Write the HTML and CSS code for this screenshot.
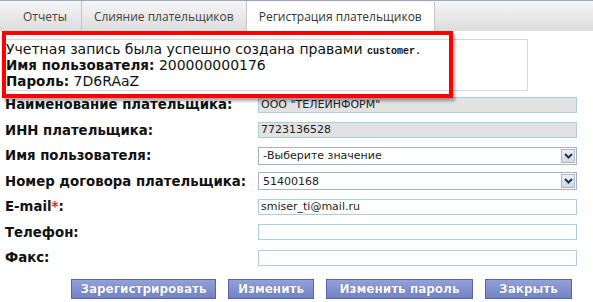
FILE: index.html
```html
<!DOCTYPE html>
<html lang="ru">
<head>
    <meta charset="UTF-8">
    <title>Регистрация плательщиков</title>
    <link rel="stylesheet" href="styles.css">
</head>
<body>
    <div class="reg-page">
        <div class="reg-tabs">
            <a href="#" class="reg-tab">Отчеты</a>
            <a href="#" class="reg-tab">Слияние плательщиков</a>
            <a href="#" class="reg-tab active">Регистрация плательщиков</a>
        </div>

        <div class="reg-content">
            <div class="reg-message">
                <div class="reg-line">Учетная запись была успешно создана правами <span class="reg-role">customer.</span></div>
                <div class="reg-line"><b>Имя пользователя:</b> 200000000176</div>
                <div class="reg-line"><b>Пароль:</b> 7D6RAaZ</div>
            </div>

            <!-- annotation frame drawn over the message -->
            <div class="reg-highlight"></div>

            <div class="reg-form">
                <label class="reg-label">Наименование плательщика:</label>
                <div class="reg-input readonly">ООО "ТЕЛЕИНФОРМ"</div>

                <label class="reg-label">ИНН плательщика:</label>
                <div class="reg-input readonly">7723136528</div>

                <label class="reg-label">Имя пользователя:</label>
                <div class="reg-select">
                    <span>-Выберите значение</span>
                    <span class="reg-arrow"><svg width="9" height="6" viewBox="0 0 9 6"><path d="M1 1 L4.5 4.5 L8 1" fill="none" stroke="#26324e" stroke-width="2"/></svg></span>
                </div>

                <label class="reg-label">Номер договора плательщика:</label>
                <div class="reg-select">
                    <span>51400168</span>
                    <span class="reg-arrow"><svg width="9" height="6" viewBox="0 0 9 6"><path d="M1 1 L4.5 4.5 L8 1" fill="none" stroke="#26324e" stroke-width="2"/></svg></span>
                </div>

                <label class="reg-label">E-mail<span class="reg-required">*</span>:</label>
                <div class="reg-input">smiser_ti@mail.ru</div>

                <label class="reg-label">Телефон:</label>
                <div class="reg-input"></div>

                <label class="reg-label">Факс:</label>
                <div class="reg-input"></div>
            </div>

            <div class="reg-buttons">
                <button class="reg-btn btn-register">Зарегистрировать</button>
                <button class="reg-btn btn-edit">Изменить</button>
                <button class="reg-btn btn-password">Изменить пароль</button>
                <button class="reg-btn btn-close">Закрыть</button>
            </div>
        </div>
    </div>
</body>
</html>
```

FILE: styles.css
```css
body {
    margin: 0;
    background: #fff;
}

.reg-page {
    width: 593px;
    height: 302px;
    overflow: hidden;
    font-family: "DejaVu Sans", Verdana, sans-serif;
    color: #111;
}

/* Tabs */
.reg-tabs {
    display: flex;
    height: 31px;
    padding-left: 10px;
    border-top: 1px solid #9aa6bf;
    background: linear-gradient(#f6f6f6, #dcdcdc);
    box-sizing: border-box;
}

.reg-tab {
    display: flex;
    align-items: center;
    padding: 0 12px;
    font-family: "Open Sans", sans-serif;
    font-size: 12px;
    color: #444;
    text-decoration: none;
    border-right: 1px solid #c4c4c4;
}

.reg-tab:first-child {
    padding-left: 13px;
    padding-right: 14px;
}

.reg-tab.active {
    background: #fff;
    color: #333;
    margin-top: 1px;
}

/* Content */
.reg-content {
    position: relative;
    padding-top: 8px;
}

.reg-message {
    margin-left: 3px;
    width: 525px;
    height: 52px;
    padding: 1px 0 0 2px;
    box-sizing: border-box;
    border: 1px solid #d8d8d8;
    font-size: 14px;
}

.reg-line {
    height: 16px;
    line-height: 16px;
    white-space: nowrap;
}

.reg-message b {
    font-size: 13.5px;
}

.reg-role {
    font-family: "Liberation Mono", monospace;
    font-size: 10px;
    font-weight: bold;
}

.reg-highlight {
    position: absolute;
    left: 2px;
    top: 0;
    width: 451px;
    height: 67px;
    box-sizing: border-box;
    border: 4px solid #ff0000;
    box-shadow: 2px 3px 3px rgba(0, 0, 0, 0.35);
}

/* Form */
.reg-form {
    display: grid;
    grid-template-columns: 253px 319px;
    grid-auto-rows: 25.5px;
    align-items: center;
    padding-left: 5px;
    margin-top: 1px;
}

.reg-label {
    font-size: 13.3px;
    font-weight: bold;
    color: #111;
}

.reg-required {
    color: #e8202a;
}

.reg-input {
    height: 16px;
    padding: 0 2px;
    box-sizing: border-box;
    border: 1px solid #a9d0d7;
    font-size: 11px;
    line-height: 14px;
    color: #222;
    background: #fff;
}

.reg-input.readonly {
    background: #e2e2e2;
}

.reg-select {
    display: flex;
    align-items: center;
    justify-content: space-between;
    height: 18px;
    padding: 0 1px 0 4px;
    box-sizing: border-box;
    border: 1px solid #a4b1c6;
    font-size: 11px;
    color: #222;
    background: #fff;
}

.reg-arrow {
    display: flex;
    align-items: center;
    justify-content: center;
    width: 14px;
    height: 14px;
    box-sizing: border-box;
    border: 1px solid #a9b4c8;
    background: linear-gradient(#eef0f5, #d3d8e3);
}

/* Buttons */
.reg-buttons {
    display: flex;
    justify-content: flex-end;
    gap: 12px;
    padding-right: 21px;
    margin-top: 8px;
}

.reg-btn {
    height: 20px;
    padding: 0;
    border: 1px solid #5664a2;
    background: linear-gradient(#93a1d8, #7383c4);
    font-family: "DejaVu Sans", Verdana, sans-serif;
    font-size: 12px;
    font-weight: bold;
    color: #fff;
    text-shadow: 0 0 1px #3c4a86;
}

.btn-register { width: 145px; }
.btn-edit { width: 86px; }
.btn-password { width: 147px; }
.btn-close { width: 87px; }
```
